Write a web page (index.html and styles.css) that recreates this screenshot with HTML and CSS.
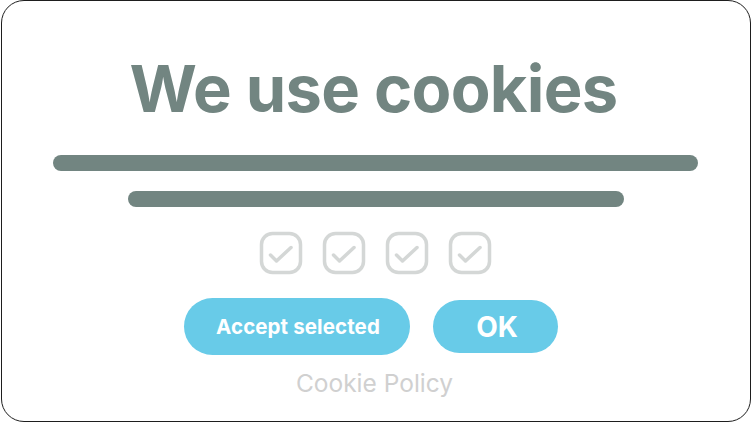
FILE: index.html
```html
<!DOCTYPE html>
<html>
<head>
<meta charset="utf-8">
<link rel="stylesheet" href="styles.css">
</head>
<body>
<div class="card">
  <h1 class="title">We use cookies</h1>
  <div class="bar bar-long"></div>
  <div class="bar bar-short"></div>
  <div class="checks">
    <svg class="check" viewBox="0 0 44 44" width="44" height="44"><rect x="2.5" y="2.5" width="39" height="39" rx="11" fill="none" stroke="#d4d7d6" stroke-width="3.5"/><path d="M11.5 24 L17.5 30 L32 16.5" fill="none" stroke="#d4d7d6" stroke-width="3.5" stroke-linecap="round" stroke-linejoin="round"/></svg>
    <svg class="check" viewBox="0 0 44 44" width="44" height="44"><rect x="2.5" y="2.5" width="39" height="39" rx="11" fill="none" stroke="#d4d7d6" stroke-width="3.5"/><path d="M11.5 24 L17.5 30 L32 16.5" fill="none" stroke="#d4d7d6" stroke-width="3.5" stroke-linecap="round" stroke-linejoin="round"/></svg>
    <svg class="check" viewBox="0 0 44 44" width="44" height="44"><rect x="2.5" y="2.5" width="39" height="39" rx="11" fill="none" stroke="#d4d7d6" stroke-width="3.5"/><path d="M11.5 24 L17.5 30 L32 16.5" fill="none" stroke="#d4d7d6" stroke-width="3.5" stroke-linecap="round" stroke-linejoin="round"/></svg>
    <svg class="check" viewBox="0 0 44 44" width="44" height="44"><rect x="2.5" y="2.5" width="39" height="39" rx="11" fill="none" stroke="#d4d7d6" stroke-width="3.5"/><path d="M11.5 24 L17.5 30 L32 16.5" fill="none" stroke="#d4d7d6" stroke-width="3.5" stroke-linecap="round" stroke-linejoin="round"/></svg>
  </div>
  <div class="buttons">
    <button class="btn btn-accept">Accept selected</button>
    <button class="btn btn-ok">OK</button>
  </div>
  <div class="policy">Cookie Policy</div>
</div>
</body>
</html>
```

FILE: styles.css
```css
html, body {
  margin: 0;
  padding: 0;
  background: #ffffff;
}
body {
  width: 752px;
  height: 423px;
  font-family: Inter, "Noto Sans", sans-serif;
}
.card {
  box-sizing: border-box;
  margin: 0 1px;
  width: 750px;
  height: 422px;
  border: 1px solid #1e1e1e;
  border-radius: 23px;
  display: flex;
  flex-direction: column;
  align-items: center;
  padding-top: 55px;
}
.title {
  margin: 0 0 0 -5px;
  font-size: 65px;
  line-height: 65px;
  font-weight: 700;
  color: #728581;
  letter-spacing: -0.7px;
}
.bar {
  background: #728581;
  height: 16px;
  border-radius: 8px;
}
.bar-long {
  width: 645px;
  margin-top: 34px;
  margin-left: -2px;
}
.bar-short {
  width: 496px;
  margin-top: 20px;
}
.checks {
  display: flex;
  gap: 19px;
  margin-top: 24px;
  margin-left: -2px;
}
.check {
  display: block;
}
.buttons {
  display: flex;
  align-items: center;
  gap: 23px;
  margin-top: 23px;
  margin-left: -10px;
}
.btn {
  border: none;
  background: #68cbe8;
  color: #ffffff;
  font-family: Inter, "Noto Sans", sans-serif;
  font-weight: 700;
  border-radius: 30px;
  padding: 0;
}
.btn-accept {
  width: 226px;
  height: 57px;
  font-size: 20.5px;
  letter-spacing: 0.1px;
  padding-left: 2px;
}
.btn-ok {
  width: 125px;
  height: 53px;
  font-size: 28px;
  padding-left: 3px;
}
.policy {
  margin-top: 13px;
  margin-left: -3px;
  font-size: 24.5px;
  color: #d0d0d0;
  line-height: 30px;
}
```
